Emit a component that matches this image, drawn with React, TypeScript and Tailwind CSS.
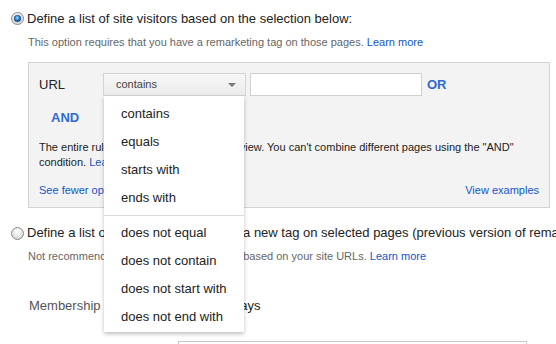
import React from "react";

function Radio({ checked, id }: { checked?: boolean; id: string }) {
  return (
    <svg width="13" height="13" viewBox="0 0 13 13" className="shrink-0 block">
      <defs>
        <radialGradient id={`bg-${id}`} cx="50%" cy="35%" r="70%">
          <stop offset="0%" stopColor="#ffffff" />
          <stop offset="100%" stopColor="#cfcfcf" />
        </radialGradient>
        <radialGradient id={`dot-${id}`} cx="45%" cy="40%" r="60%">
          <stop offset="0%" stopColor="#a6e0ff" />
          <stop offset="55%" stopColor="#2a7ccc" />
          <stop offset="100%" stopColor="#0c3d7c" />
        </radialGradient>
      </defs>
      <circle cx="6.5" cy="6.5" r="6" fill={`url(#bg-${id})`} stroke="#8c8c8c" strokeWidth="1" />
      {checked && <circle cx="6.5" cy="6.5" r="3.3" fill={`url(#dot-${id})`} stroke="#1b4f8e" strokeWidth="0.6" />}
    </svg>
  );
}

const items1 = ["contains", "equals", "starts with", "ends with"];
const items2 = ["does not equal", "does not contain", "does not start with", "does not end with"];

export default function App() {
  return (
    <div className="relative w-[556px] h-[344px] overflow-hidden bg-white font-['Liberation_Sans',Arial,sans-serif] text-[#222]">
      <div className="flex items-start pt-[11px] pl-[11px]">
        <div className="mt-[1px]">
          <Radio checked id="a" />
        </div>
        <span className="ml-[3px] text-[13px] leading-[16px] whitespace-nowrap">
          Define a list of site visitors based on the selection below:
        </span>
      </div>
      <p className="mt-[8px] ml-[28px] text-[11px] leading-[14px] text-[#666] whitespace-nowrap">
        This option requires that you have a remarketing tag on those pages.{" "}
        <a className="text-[#15c]">Learn more</a>
      </p>

      <div className="mt-[13px] ml-[28px] w-[522px] h-[146px] border border-[#d3d3d3] bg-[#f3f3f3] pt-[10px] px-[10px]">
        <div className="flex items-center h-[23px]">
          <span className="w-[64px] text-[13px] leading-[16px]">URL</span>
          <div className="w-[143px] h-[23px] border border-[#d3d3d3] bg-gradient-to-b from-[#f7f7f7] to-[#ebebeb] flex items-center justify-between pl-[12px] pr-[9px] text-[11px] text-[#444]">
            <span>contains</span>
            <span className="w-0 h-0 border-t-[4px] border-t-[#777] border-x-[4px] border-x-transparent" />
          </div>
          <div className="ml-[4px] w-[172px] h-[23px] border border-[#d0d0d0] bg-white" />
          <span className="ml-[5px] text-[13px] leading-[16px] font-bold text-[#2d6cd3]">OR</span>
        </div>
        <div className="mt-[14px] ml-[12px] text-[13px] leading-[16px] font-bold text-[#2d6cd3]">AND</div>
        <p className="mt-[14px] text-[11px] leading-[15px] whitespace-nowrap">
          The entire rule must match the URL they view. You can't combine different pages using the "AND"
          <br />
          condition. <a className="text-[#15c]">Learn more</a>
        </p>
        <div className="mt-[13px] flex justify-between text-[11px] leading-[14px] text-[#15c]">
          <a>See fewer options</a>
          <a>View examples</a>
        </div>
      </div>

      <div className="mt-[17px] flex items-start pl-[11px]">
        <div className="mt-[2px]">
          <Radio id="b" />
        </div>
        <span className="ml-[3px] text-[13px] leading-[16px] whitespace-nowrap">
          Define a list of site visitors by placing a new tag on selected pages (previous version of remarketing)
        </span>
      </div>
      <p className="mt-[8px] ml-[28px] text-[11px] leading-[14px] text-[#666] whitespace-nowrap">
        Not recommended. Users are added to lists based on your site URLs.{" "}
        <a className="text-[#15c]">Learn more</a>
      </p>

      <div className="mt-[31px] ml-[29px] flex items-center h-[24px]">
        <span className="w-[149px] text-[13px] leading-[16px] text-[#555] whitespace-nowrap overflow-hidden">
          Membership duration
        </span>
        <div className="w-[48px] h-[24px] border border-[#ccc] bg-white" />
        <span className="ml-[7px] text-[13px] leading-[16px]">days</span>
      </div>

      <div className="mt-[23px] ml-[178px] w-[349px] h-[40px] border border-[#c8c8c8] bg-white" />

      <div className="absolute left-[104px] top-[96px] w-[140px] bg-white pt-[4px] pb-[1px] shadow-[0_2px_4px_rgba(0,0,0,0.25)]">
        {items1.map((t) => (
          <div key={t} className="h-[28px] flex items-center pl-[17px] text-[13px] text-[#222]">
            {t}
          </div>
        ))}
        <div className="my-[3px] h-px bg-[#d9d9d9]" />
        {items2.map((t) => (
          <div key={t} className="h-[28px] flex items-center pl-[17px] text-[13px] text-[#222]">
            {t}
          </div>
        ))}
      </div>
    </div>
  );
}
